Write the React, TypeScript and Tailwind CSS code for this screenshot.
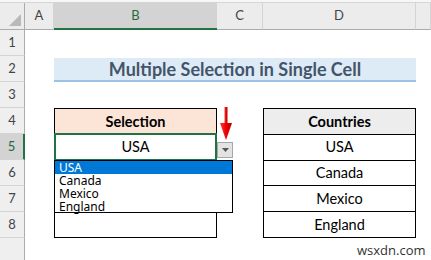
const colHeaders = [
  { label: "A", cls: "col-start-2" },
  { label: "B", cls: "col-start-3", selected: true },
  { label: "C", cls: "col-start-4" },
  { label: "D", cls: "col-start-5" },
  { label: "", cls: "col-start-6" },
];

const rowHeaders = [
  { label: "1", cls: "row-start-3" },
  { label: "2", cls: "row-start-4" },
  { label: "3", cls: "row-start-5" },
  { label: "4", cls: "row-start-6" },
  { label: "5", cls: "row-start-7", selected: true },
  { label: "6", cls: "row-start-8" },
  { label: "7", cls: "row-start-9" },
  { label: "8", cls: "row-start-10" },
  { label: "", cls: "row-start-11" },
];

const countries = ["USA", "Canada", "Mexico", "England"];

function RedArrow() {
  return (
    <svg width="14" height="34" viewBox="0 0 14 34" className="absolute left-[219px] top-[107px]">
      <defs>
        <linearGradient id="red" x1="0" x2="1" y1="0" y2="0">
          <stop offset="0" stopColor="#ff3a3a" />
          <stop offset="0.5" stopColor="#ee0000" />
          <stop offset="1" stopColor="#b80000" />
        </linearGradient>
      </defs>
      <rect x="5.5" y="0" width="3" height="18" fill="url(#red)" />
      <polygon points="1,16 13,16 7,33" fill="url(#red)" />
    </svg>
  );
}

export default function App() {
  return (
    <div className="relative h-[260px] w-[431px] overflow-hidden bg-white font-['Lato','Liberation_Sans',sans-serif] text-black">
      <div className="grid grid-cols-[25px_29px_163px_46px_153px_15px] grid-rows-[3px_27px_repeat(9,26px)]">
        <div className="col-span-full row-start-1 border-b border-[#d6d6d6] bg-[#f6f6f6]" />

        <div className="relative col-start-1 row-start-2 border-r border-b border-[#ababab] bg-[#ececec]">
          <svg width="12" height="12" viewBox="0 0 12 12" className="absolute right-[3px] bottom-[3px]">
            <polygon points="12,0 12,12 0,12" fill="#b9b9b9" />
          </svg>
        </div>
        {colHeaders.map((c) => (
          <div
            key={c.cls}
            className={`${c.cls} row-start-2 flex items-center justify-center text-[13px] ${
              c.selected
                ? "border-b-2 border-[#217346] bg-[#d3d3d3] text-[#1e6b3f]"
                : "border-r border-b border-r-[#d4d4d4] border-b-[#ababab] bg-[#ececec] text-[#444]"
            }`}
          >
            {c.label}
          </div>
        ))}

        {rowHeaders.map((r) => (
          <div
            key={r.cls}
            className={`col-start-1 ${r.cls} flex items-center justify-center text-[13px] ${
              r.selected
                ? "border-r-2 border-b border-r-[#217346] border-b-[#d4d4d4] bg-[#d3d3d3] text-[#1e6b3f]"
                : "border-r border-b border-r-[#ababab] border-b-[#d4d4d4] bg-[#efefef] text-[#444]"
            }`}
          >
            {r.label}
          </div>
        ))}

        <div className="col-start-3 col-span-3 row-start-4 mt-[2px] flex items-center justify-center border-b-2 border-[#9bc2e6] bg-[#ddebf7] text-[18px] font-bold text-[#44546a]">
          Multiple Selection in Single Cell
        </div>

        <div className="col-start-3 row-start-6 row-span-5 flex flex-col divide-y divide-black border border-black text-[14.5px]">
          <div className="flex flex-1 items-center justify-center bg-[#fce4d6] font-bold">Selection</div>
          <div className="relative flex flex-1 items-center justify-center">
            USA
            <div className="absolute -inset-x-px -top-[2px] -bottom-px border-2 border-[#217346]" />
          </div>
          <div className="flex-1" />
          <div className="flex-1" />
          <div className="flex-1" />
        </div>

        <div className="col-start-5 row-start-6 row-span-5 flex flex-col divide-y divide-black border border-black text-[14.5px]">
          <div className="flex flex-1 items-center justify-center bg-[#ededed] font-bold">Countries</div>
          {countries.map((c) => (
            <div key={c} className="flex flex-1 items-center justify-center">
              {c}
            </div>
          ))}
        </div>
      </div>

      <RedArrow />

      <div className="absolute left-[217px] top-[142px] flex h-[16px] w-[16px] items-center justify-center border border-[#a6a6a6] bg-[#e3e3e3]">
        <svg width="7" height="4" viewBox="0 0 7 4">
          <polygon points="0,0 7,0 3.5,4" fill="#555" />
        </svg>
      </div>

      <div className="absolute left-[54px] top-[160px] flex h-[53px] w-[179px] flex-col border border-black bg-white font-['Noto_Sans',sans-serif] text-[12px] leading-[13px]">
        {countries.map((c, i) => (
          <div key={c} className={`h-[13px] shrink-0 pl-[4px] ${i === 0 ? "bg-[#0078d7] text-white" : "text-black"}`}>
            {c}
          </div>
        ))}
      </div>

      <div className="absolute left-[357px] top-[242px] font-['Open_Sans',sans-serif] text-[13px] leading-[16px] text-[#333]">
        wsxdn.com
      </div>
    </div>
  );
}
